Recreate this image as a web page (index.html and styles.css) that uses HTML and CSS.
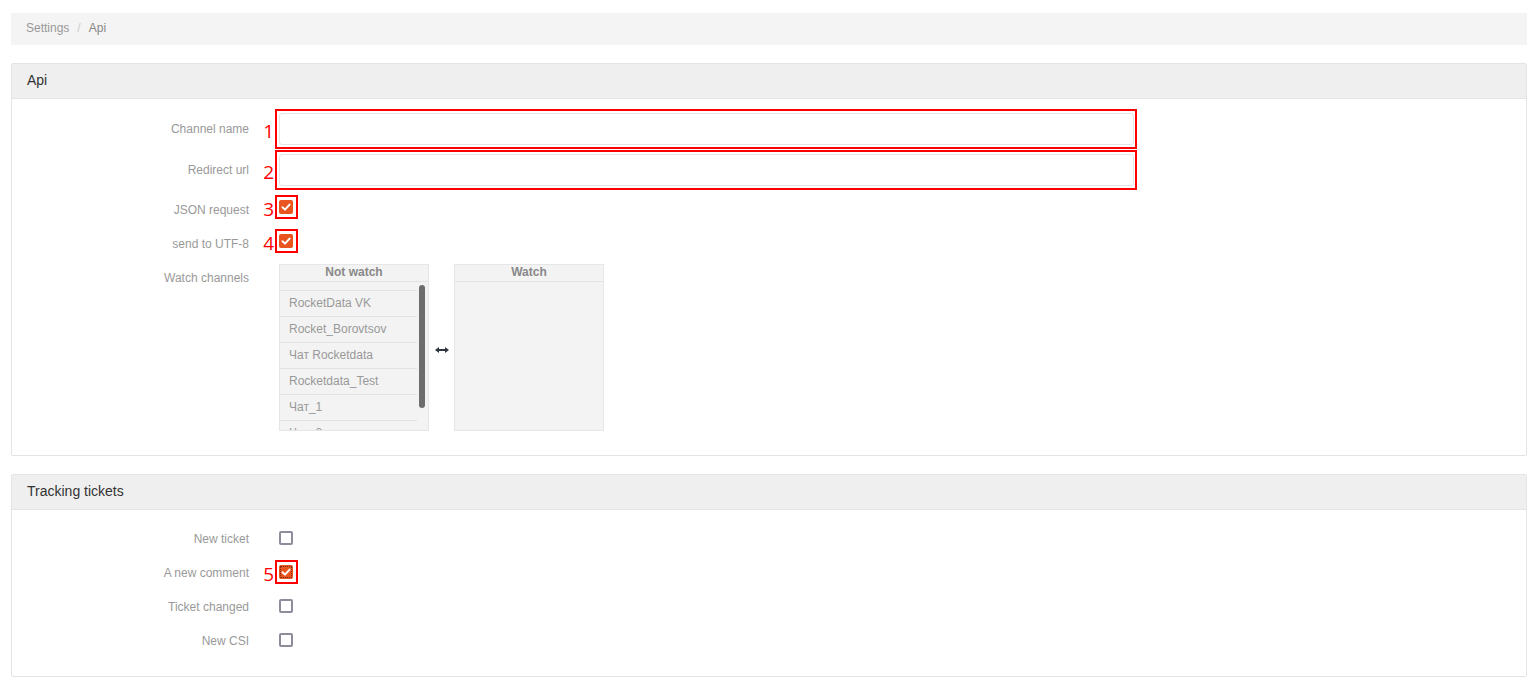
FILE: index.html
```html
<!DOCTYPE html>
<html lang="en">
<head>
	<meta charset="UTF-8">
	<title>Settings / Api</title>
	<link rel="stylesheet" href="styles.css">
</head>
<body>
	<div class="page">
		<div class="crumbs">
			<a class="crumb" href="#">Settings</a><span class="sep">/</span><span class="crumb-active">Api</span>
		</div>

		<div class="panel">
			<div class="panel-head">Api</div>
			<div class="panel-body body-api">
				<div class="row">
					<label class="row-label">Channel name</label>
					<div class="mark mark-field"><span class="mark-num">1</span><input class="field" type="text"></div>
				</div>
				<div class="row row-second">
					<label class="row-label">Redirect url</label>
					<div class="mark mark-field"><span class="mark-num">2</span><input class="field" type="text"></div>
				</div>
				<div class="row row-check">
					<label class="row-label">JSON request</label>
					<div class="mark mark-box"><span class="mark-num">3</span><span class="check checked"><svg width="14" height="14" viewBox="0 0 14 14"><polyline points="3.5,7.2 6,9.6 10.6,4.6" fill="none" stroke="#fff" stroke-width="2" stroke-linecap="round" stroke-linejoin="round"/></svg></span></div>
				</div>
				<div class="row row-check">
					<label class="row-label">send to UTF-8</label>
					<div class="mark mark-box"><span class="mark-num">4</span><span class="check checked"><svg width="14" height="14" viewBox="0 0 14 14"><polyline points="3.5,7.2 6,9.6 10.6,4.6" fill="none" stroke="#fff" stroke-width="2" stroke-linecap="round" stroke-linejoin="round"/></svg></span></div>
				</div>
				<div class="row row-lists">
					<label class="row-label label-top">Watch channels</label>
					<div class="lists">
						<div class="list">
							<div class="list-head">Not watch</div>
							<div class="list-view">
								<ul class="list-items">
									<li>RocketData VK</li>
									<li>Rocket_Borovtsov</li>
									<li>Чат Rocketdata</li>
									<li>Rocketdata_Test</li>
									<li>Чат_1</li>
									<li>Чат_2</li>
								</ul>
								<span class="thumb"></span>
							</div>
						</div>
						<div class="swap">
							<svg width="14" height="8" viewBox="0 0 14 8"><line x1="2" y1="4" x2="12" y2="4" stroke="#2f3640" stroke-width="2"/><polygon points="0,4 4,1 4,7" fill="#2f3640"/><polygon points="14,4 10,1 10,7" fill="#2f3640"/></svg>
						</div>
						<div class="list">
							<div class="list-head">Watch</div>
							<div class="list-view"></div>
						</div>
					</div>
				</div>
			</div>
		</div>

		<div class="panel">
			<div class="panel-head">Tracking tickets</div>
			<div class="panel-body body-tickets">
				<div class="row row-ticket">
					<label class="row-label">New ticket</label>
					<div class="plain-box"><span class="check"></span></div>
				</div>
				<div class="row row-ticket">
					<label class="row-label">A new comment</label>
					<div class="mark mark-box"><span class="mark-num">5</span><span class="check checked focused"><svg width="14" height="14" viewBox="0 0 14 14"><polyline points="3.5,7.2 6,9.6 10.6,4.6" fill="none" stroke="#fff" stroke-width="2" stroke-linecap="round" stroke-linejoin="round"/></svg></span></div>
				</div>
				<div class="row row-ticket">
					<label class="row-label">Ticket changed</label>
					<div class="plain-box"><span class="check"></span></div>
				</div>
				<div class="row row-ticket">
					<label class="row-label">New CSI</label>
					<div class="plain-box"><span class="check"></span></div>
				</div>
			</div>
		</div>
	</div>
</body>
</html>
```

FILE: styles.css
```css
* {
    padding: 0;
    margin: 0;
    box-sizing: border-box;
    list-style: none;
}

body {
    font-family: "Liberation Sans", Arial, sans-serif;
    font-size: 12px;
    color: #333;
    background: #fff;
}

.page {
    padding: 13px 12px 0 11px;
}

/* breadcrumbs */
.crumbs {
    height: 32px;
    line-height: 31px;
    padding-left: 15px;
    background: #f4f4f4;
}

.crumb {
    color: #999;
    text-decoration: none;
}

.sep {
    color: #ccc;
    margin: 0 8px;
}

.crumb-active {
    color: #888;
}

/* panels */
.panel {
    margin-top: 18px;
    border: 1px solid #e4e4e4;
    border-radius: 2px;
    background: #fff;
}

.panel-head {
    height: 35px;
    line-height: 33px;
    padding-left: 15px;
    font-size: 14px;
    color: #333;
    background: #efefef;
    border-bottom: 1px solid #e4e4e4;
}

.body-api {
    padding: 10px 0 24px;
}

.body-tickets {
    padding: 11px 0 19px;
}

/* rows */
.row {
    display: flex;
    align-items: center;
}

.row-second {
    margin-top: 1px;
}

.row-check,
.row-ticket {
    height: 34px;
}

.row-check .row-label {
    margin-top: 5px;
}

.row-ticket .row-label {
    margin-top: 1px;
}

.row-lists {
    align-items: flex-start;
    margin-top: 6px;
}

.row-label {
    width: 237px;
    margin-right: 26px;
    text-align: right;
    color: #999;
    font-size: 12px;
}

.label-top {
    padding-top: 7px;
}

/* red annotation frames */
.mark {
    position: relative;
    border: 2px solid #f00;
}

.mark-num {
    position: absolute;
    right: 100%;
    margin-right: 3px;
    top: 50%;
    margin-top: -9px;
    font-family: "Open Sans", "DejaVu Sans", sans-serif;
    font-size: 19px;
    line-height: 22px;
    color: #f00;
}

.mark-field {
    width: 862px;
    height: 40px;
    padding: 2px 1px 2px 2px;
}

.field {
    display: block;
    width: 100%;
    height: 100%;
    border: 1px solid #e2e6e6;
    border-radius: 3px;
    background: #fff;
    outline: none;
}

.mark-box {
    width: 23px;
    height: 24px;
    padding: 3px 3px 3px 2px;
}

.plain-box {
    padding: 0 3px 0 4px;
}

/* checkboxes */
.check {
    display: block;
    width: 14px;
    height: 14px;
    border: 2px solid #8d8c9a;
    border-radius: 2px;
    background: #fff;
}

.check.checked {
    border: 0;
    background: #e9541f;
}

.check svg {
    display: block;
}

.check.focused {
    outline: 1px dotted #7a2a10;
    outline-offset: -2px;
}

/* watch lists */
.lists {
    display: flex;
    align-items: center;
    margin-left: 4px;
}

.list {
    width: 150px;
    height: 167px;
    border: 1px solid #e6e6e6;
    background: #f3f3f3;
}

.list-head {
    height: 17px;
    line-height: 14px;
    text-align: center;
    font-weight: bold;
    color: #888;
    border-bottom: 1px solid #e4e4e4;
}

.list-view {
    position: relative;
    height: 148px;
    overflow: hidden;
}

.list-items {
    padding-top: 8px;
    width: 137px;
}

.list-items li {
    height: 26px;
    line-height: 25px;
    padding-left: 9px;
    color: #999;
    border-bottom: 1px solid #e2e2e2;
    white-space: nowrap;
}

.list-items li:first-child {
    height: 27px;
    border-top: 1px solid #e2e2e2;
    line-height: 24px;
}

.thumb {
    position: absolute;
    left: 139px;
    top: 3px;
    width: 6px;
    height: 123px;
    border-radius: 3px;
    background: #6d6d6d;
}

.swap {
    width: 25px;
    display: flex;
    justify-content: center;
    padding-top: 4px;
}

.swap svg {
    display: block;
}
```
